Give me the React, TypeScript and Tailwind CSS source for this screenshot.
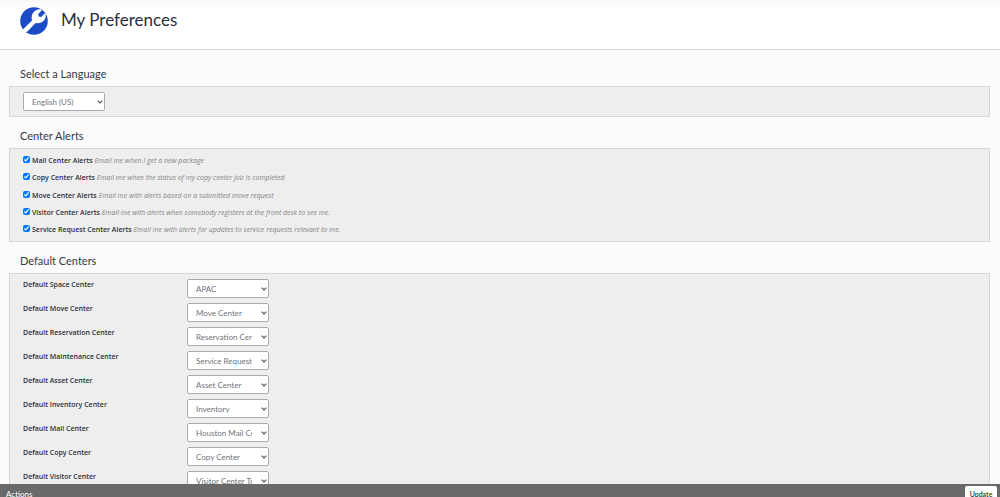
import React from 'react';

const alerts = [
  { id: 'mail', title: 'Mail Center Alerts', hint: 'Email me when I get a new package' },
  { id: 'copy', title: 'Copy Center Alerts', hint: 'Email me when the status of my copy center job is completed' },
  { id: 'move', title: 'Move Center Alerts', hint: 'Email me with alerts based on a submitted move request' },
  { id: 'visitor', title: 'Visitor Center Alerts', hint: 'Email me with alerts when somebody registers at the front desk to see me.' },
  { id: 'service', title: 'Service Request Center Alerts', hint: 'Email me with alerts for updates to service requests relevant to me.' },
];

const centers = [
  { id: 'space', label: 'Default Space Center', value: 'APAC' },
  { id: 'move', label: 'Default Move Center', value: 'Move Center' },
  { id: 'reservation', label: 'Default Reservation Center', value: 'Reservation Center' },
  { id: 'maintenance', label: 'Default Maintenance Center', value: 'Service Request Center' },
  { id: 'asset', label: 'Default Asset Center', value: 'Asset Center' },
  { id: 'inventory', label: 'Default Inventory Center', value: 'Inventory' },
  { id: 'mail', label: 'Default Mail Center', value: 'Houston Mail Center' },
  { id: 'copy', label: 'Default Copy Center', value: 'Copy Center' },
  { id: 'visitor', label: 'Default Visitor Center', value: 'Visitor Center Tulsa' },
];

const WrenchLogo: React.FC = () => (
  <svg viewBox="0 0 28 28" className="size-7 shrink-0" aria-hidden="true">
    <circle cx="14" cy="14" r="13.8" fill="#1c4bc8" />
    <path
      d="M5.4 25.4 2.8 22.4 12 13.6C11.1 10.4 11.8 6.9 14 4.7C16 2.7 18.6 1.8 21.3 2.5C21.8 2.7 21.9 3.1 21.6 3.5L18.2 6.9L18.7 9.4L21.2 9.9L24.6 6.5C25 6.2 25.4 6.3 25.6 6.8C26.3 9.5 25.4 12.2 23.4 14.1C21.2 16.2 18 16.8 15.6 16L7.6 24.2Z"
      fill="#fff"
    />
  </svg>
);

const Select: React.FC<{ id: string; value: string; label?: string }> = ({ id, value, label }) => (
  <div className="relative w-[82px] shrink-0">
    <select
      id={id}
      aria-label={label}
      defaultValue={value}
      className="block h-[19px] w-full appearance-none rounded-xs border border-[#a9a9b2] bg-white pl-2 pr-4 text-[8px] leading-4 text-[#71747a]"
    >
      <option>{value}</option>
    </select>
    <svg viewBox="0 0 6 4" className="pointer-events-none absolute right-[2px] top-2 h-1 w-1.5" aria-hidden="true">
      <path d="M.7.6 3 2.9 5.3.6" fill="none" stroke="#555" strokeWidth="1.1" />
    </svg>
  </div>
);

const Section: React.FC<{ title: string; children: React.ReactNode }> = ({ title, children }) => (
  <section className="mb-[11px]">
    <h2 className="mb-1 ml-[11px] text-[11px] leading-4 text-[#343a44]">{title}</h2>
    <div className="border border-[#d6d6d6] bg-[#eeeeee] px-[13px] py-[5px]">{children}</div>
  </section>
);

const App: React.FC = () => {
  return (
    <div className="flex h-screen flex-col overflow-hidden bg-[#fbfbfb] font-['Lato','Open_Sans',sans-serif] text-[#2b303a]">
      <header className="flex h-[50px] shrink-0 items-start gap-[13px] border-b border-[#d8d8d8] bg-white bg-linear-to-b from-[#f8f8f8] to-white to-20% pl-5 pt-[7px]">
        <WrenchLogo />
        <h1 className="text-[17px] leading-[26px]">My Preferences</h1>
      </header>

      <main className="min-h-0 flex-1 overflow-y-auto pl-[9px] pr-[10px] pt-4 [scrollbar-width:none]">
        <Section title="Select a Language">
          <Select id="language" value="English (US)" label="Language" />
        </Section>

        <Section title="Center Alerts">
          <ul className="flex h-[82px] flex-col justify-between pt-px">
            {alerts.map((alert) => (
              <li key={alert.id} className="flex h-3 items-start font-['Open_Sans',sans-serif] text-[7px] leading-3">
                <input id={`alert-${alert.id}`} type="checkbox" defaultChecked className="mr-0.5 mt-px size-[7px] accent-[#0075ff]" />
                <label htmlFor={`alert-${alert.id}`} className="whitespace-nowrap">
                  <strong className="font-semibold">{alert.title}</strong>{' '}
                  <em className="text-[#858585]">{alert.hint}</em>
                </label>
              </li>
            ))}
          </ul>
        </Section>

        <Section title="Default Centers">
          {centers.map((center) => (
            <div key={center.id} className="flex h-6 items-start">
              <label htmlFor={`center-${center.id}`} className="w-[164px] font-['Open_Sans',sans-serif] text-[7px] font-semibold leading-3">
                {center.label}
              </label>
              <Select id={`center-${center.id}`} value={center.value} />
            </div>
          ))}
        </Section>
      </main>

      <footer className="flex h-[13px] shrink-0 items-start justify-between overflow-hidden bg-[#696969] pl-1.5 pr-[3px] pt-0.5">
        <span className="pt-0.5 text-[8px] leading-3 text-white">Actions</span>
        <button type="button" className="h-4 w-8 rounded-xs bg-white text-[7px] font-semibold leading-[14px]">
          Update
        </button>
      </footer>
    </div>
  );
};

export default App;
